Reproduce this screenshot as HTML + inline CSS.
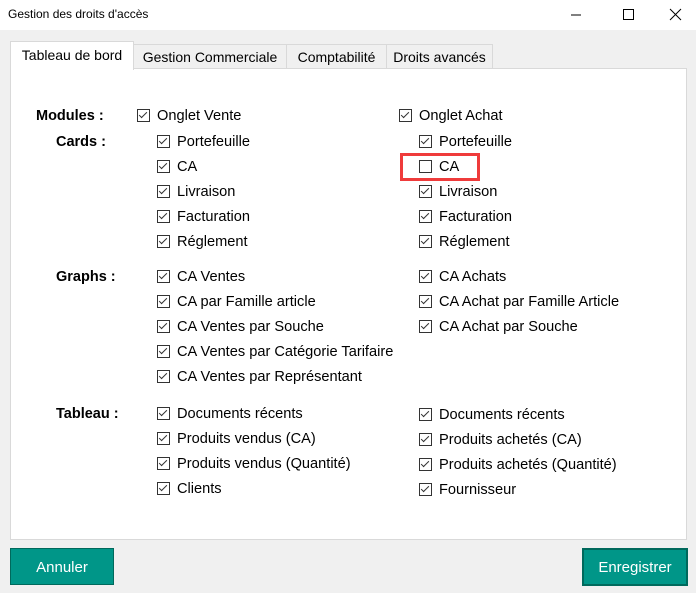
<!DOCTYPE html>
<html><head><style>
body{margin:0;width:696px;height:593px;background:#f0f0f0;font-family:"Liberation Sans",sans-serif;position:relative;overflow:hidden;color:#000}
.title{position:absolute;left:0;top:0;width:696px;height:30px;background:#fff}
.title span{position:absolute;left:8px;top:7px;font-size:12px}
.panel{position:absolute;left:10px;top:68px;width:675px;height:470px;background:#fff;border:1px solid #d9d9d9}
.tab{position:absolute;top:44px;height:23px;border:1px solid #d9d9d9;border-bottom:none;background:#f0f0f0;font-size:14px;text-align:center;line-height:25px;white-space:nowrap}
.tab.a{top:41px;height:28px;background:#fff;z-index:2;line-height:27px}
.cb{position:absolute;width:11px;height:11px;border:1px solid #333;background:#fff}
.cb.c::after{content:"";position:absolute;left:3px;top:0px;width:3px;height:7px;border:solid #333;border-width:0 1.5px 1.5px 0;transform:rotate(45deg)}
.lbl{position:absolute;font-size:14.6px;white-space:nowrap}
.b{font-weight:bold;font-size:14.5px}
.btn{position:absolute;top:548px;height:35px;background:#009688;border:1px solid #00695c;color:#fff;font-size:15px;text-align:center;line-height:37px}
</style></head><body>
<div class="title"><span>Gestion des droits d'accès</span>
<svg style="position:absolute;left:570px;top:8px" width="116" height="14"><line x1="1" y1="7" x2="11" y2="7" stroke="#000"/><rect x="53.5" y="1.5" width="10" height="10" fill="none" stroke="#000"/><path d="M100 1 L111 12 M111 1 L100 12" stroke="#000"/></svg></div>
<div class="panel"></div>
<div class="tab a" style="left:10px;width:122px">Tableau de bord</div>
<div class="tab" style="left:133px;width:152px">Gestion Commerciale</div>
<div class="tab" style="left:286px;width:99px">Comptabilité</div>
<div class="tab" style="left:386px;width:105px">Droits avancés</div>
<div id="c"></div>
<div style="position:absolute;left:400px;top:153px;width:74px;height:22px;border:3px solid #ef3b3b"></div>
<div class="btn" style="left:10px;width:102px">Annuler</div>
<div class="btn" style="left:582px;width:102px;border-width:2px;height:34px;line-height:36px">Enregistrer</div>
<script>
var h="";
function L(x,y,t,b){h+='<div class="lbl'+(b?' b':'')+'" style="left:'+x+'px;top:'+(y-7)+'px">'+t+'</div>';}
function C(x,y,t,c){h+='<div class="cb'+(c===false?'':' c')+'" style="left:'+x+'px;top:'+(y-6)+'px"></div>';L(x+20,y,t);}
L(36,115,"Modules :",1);L(56,141,"Cards :",1);L(56,276,"Graphs :",1);L(56,413,"Tableau :",1);
C(137,115,"Onglet Vente");C(399,115,"Onglet Achat");
var l=[[141,"Portefeuille"],[166,"CA"],[191,"Livraison"],[216,"Facturation"],[241,"Réglement"],[276,"CA Ventes"],[301,"CA par Famille article"],[326,"CA Ventes par Souche"],[351,"CA Ventes par Catégorie Tarifaire"],[376,"CA Ventes par Représentant"],[413,"Documents récents"],[438,"Produits vendus (CA)"],[463,"Produits vendus (Quantité)"],[488,"Clients"]];
l.forEach(function(a){C(157,a[0],a[1]);});
var r=[[141,"Portefeuille"],[166,"CA",false],[191,"Livraison"],[216,"Facturation"],[241,"Réglement"],[276,"CA Achats"],[301,"CA Achat par Famille Article"],[326,"CA Achat par Souche"],[414,"Documents récents"],[439,"Produits achetés (CA)"],[464,"Produits achetés (Quantité)"],[489,"Fournisseur"]];
r.forEach(function(a){C(419,a[0],a[1],a[2]);});
document.getElementById("c").innerHTML=h;
</script>
</body></html>
